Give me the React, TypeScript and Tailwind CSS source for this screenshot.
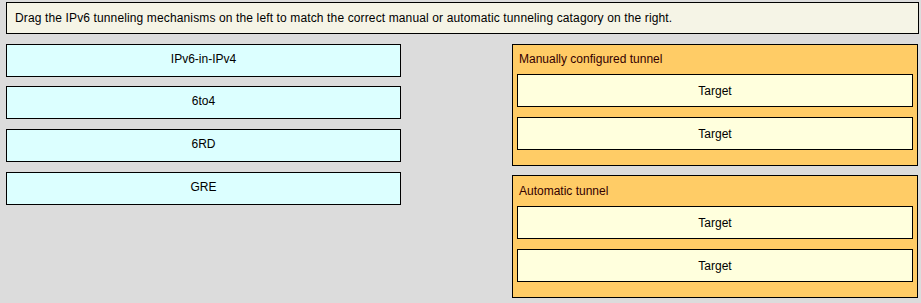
export default function App() {
  const sources = ["IPv6-in-IPv4", "6to4", "6RD", "GRE"];
  const groups = ["Manually configured tunnel", "Automatic tunnel"];

  return (
    <div className="w-[921px] h-[303px] overflow-hidden bg-[#dcdcdc] pl-[6px] pr-[2px] pt-[2px] font-['Liberation_Sans',Arial,sans-serif] text-[12px] text-black">
      <div className="h-[32px] border border-black bg-[#f5f4e6] pl-[8px] flex items-center tracking-[0.13px]">
        Drag the IPv6 tunneling mechanisms on the left to match the correct manual or automatic tunneling catagory on the right.
      </div>

      <div className="mt-[10px] flex">
        <div className="w-[395px] flex flex-col">
          {sources.map((s, i) => (
            <div
              key={s}
              className={`h-[33px] border border-black bg-[#dcffff] flex items-center justify-center pb-[3px] ${
                i === 0 ? "" : i === 1 ? "mt-[9px]" : "mt-[10px]"
              }`}
            >
              {s}
            </div>
          ))}
        </div>

        <div className="ml-auto mr-[1px] w-[406px] flex flex-col">
          {groups.map((g, i) => (
            <div
              key={g}
              className={`border border-black bg-[#ffcc66] px-[4px] pb-[15px] ${i === 1 ? "mt-[9px]" : ""}`}
            >
              <div className={`${i === 1 ? "h-[30px]" : "h-[29px]"} flex items-center pl-[2px] pb-[1px] text-[#330000]`}>
                {g}
              </div>
              <div className="h-[33px] border border-black bg-[#ffffdd] flex items-center justify-center">
                Target
              </div>
              <div className="mt-[10px] h-[33px] border border-black bg-[#ffffdd] flex items-center justify-center">
                Target
              </div>
            </div>
          ))}
        </div>
      </div>
    </div>
  );
}
